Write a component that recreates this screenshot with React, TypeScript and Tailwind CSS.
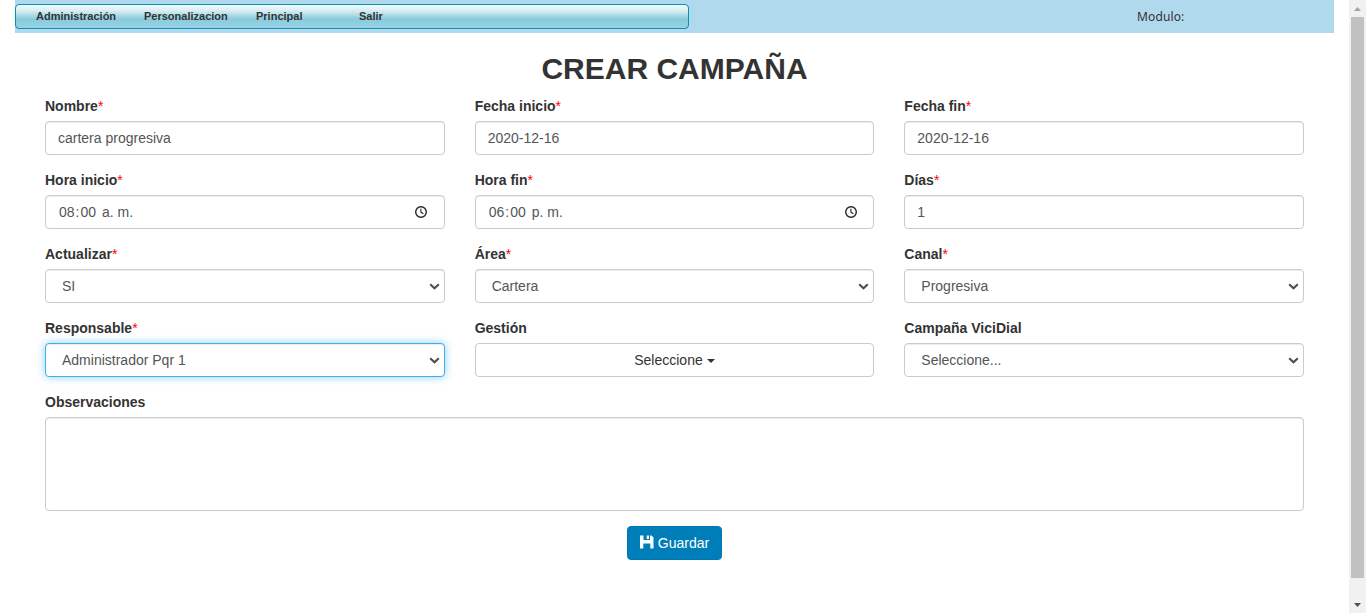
import React from "react";

const control =
  "block h-[34px] w-full rounded border border-[#ccc] bg-white px-3 py-1.5 text-sm leading-5 text-[#555] shadow-[inset_0_1px_1px_rgba(0,0,0,0.075)] outline-none";

function Field({ label, required, children }: { label: string; required?: boolean; children: React.ReactNode }) {
  return (
    <div className="mb-[15px]">
      <label className="mb-[5px] block text-sm leading-5 font-bold">
        {label}
        {required && <span className="font-normal text-[red]">*</span>}
      </label>
      {children}
    </div>
  );
}

function SelectBox({ value, focused }: { value: string; focused?: boolean }) {
  return (
    <div className="relative">
      <select
        className={
          focused
            ? "block h-[34px] w-full appearance-none rounded border border-[#3cb0e8] bg-white px-4 py-1.5 text-sm leading-5 text-[#555] shadow-[inset_0_1px_1px_rgba(0,0,0,0.075),0_0_8px_rgba(60,176,240,0.6)] outline-none"
            : `${control} appearance-none pl-4`
        }
      >
        <option>{value}</option>
      </select>
      <svg className="pointer-events-none absolute top-[14px] right-[5px]" width="11" height="8" viewBox="0 0 11 8" fill="none">
        <path d="M1.2 1.2L5.5 5.2L9.8 1.2" stroke="#4d4d4d" strokeWidth="2.1" />
      </svg>
    </div>
  );
}

function TimeBox({ hour, minute, period }: { hour: string; minute: string; period: string }) {
  return (
    <div className={`${control} flex items-center`}>
      <span className="px-px">{hour}</span>
      <span>:</span>
      <span className="px-px">{minute}</span>
      <span className="ml-[5px]">{period}</span>
      <svg className="mr-[3.6px] ml-auto" width="14" height="14" viewBox="0 0 14 14" fill="none" stroke="#222">
        <circle cx="7" cy="7" r="5.3" strokeWidth="1.4" />
        <path d="M6.9 3.8V7.2L9.4 8.8" strokeWidth="1.1" />
      </svg>
    </div>
  );
}

export default function App() {
  return (
    <div className="flex h-[613px] w-full overflow-hidden bg-white font-['Liberation_Sans',Arial,sans-serif] text-[#333]">
      <main className="flex-1 px-[15px]">
        <header className="flex h-[33px] items-start bg-[#b1d9ed] pt-1">
          <nav className="flex h-[25px] w-[674px] rounded-[4px] border border-[#0b8fb5] bg-[linear-gradient(to_bottom,#f4fbfc_0%,#d6eef3_25%,#88cbdc_62%,#98d2e5_100%)] pl-5 text-[11px] leading-[23px] font-bold">
            <a className="w-[108px]">Administración</a>
            <a className="w-[112px]">Personalizacion</a>
            <a className="w-[103px]">Principal</a>
            <a>Salir</a>
          </nav>
          <span className="ml-[448px] font-['Noto_Sans',sans-serif] text-[12px] leading-[25px] tracking-[0.12px]">Modulo:</span>
        </header>

        <h1 className="mt-[19px] mb-[11px] text-center text-[30px] leading-[33px] font-bold">CREAR CAMPAÑA</h1>

        <form className="px-[30px]">
          <div className="grid grid-cols-3 gap-x-[30px]">
            <Field label="Nombre" required>
              <input className={control} defaultValue="cartera progresiva" />
            </Field>
            <Field label="Fecha inicio" required>
              <input className={control} defaultValue="2020-12-16" />
            </Field>
            <Field label="Fecha fin" required>
              <input className={control} defaultValue="2020-12-16" />
            </Field>
            <Field label="Hora inicio" required>
              <TimeBox hour="08" minute="00" period="a. m." />
            </Field>
            <Field label="Hora fin" required>
              <TimeBox hour="06" minute="00" period="p. m." />
            </Field>
            <Field label="Días" required>
              <input className={control} defaultValue="1" />
            </Field>
            <Field label="Actualizar" required>
              <SelectBox value="SI" />
            </Field>
            <Field label="Área" required>
              <SelectBox value="Cartera" />
            </Field>
            <Field label="Canal" required>
              <SelectBox value="Progresiva" />
            </Field>
            <Field label="Responsable" required>
              <SelectBox value="Administrador Pqr 1" focused />
            </Field>
            <Field label="Gestión">
              <button type="button" className="flex h-[34px] w-full items-center justify-center rounded border border-[#ccc] bg-white text-sm leading-5 text-[#333]">
                Seleccione
                <svg className="mt-px ml-1" width="8" height="4" viewBox="0 0 8 4">
                  <path d="M0 0H8L4 4Z" fill="#333" />
                </svg>
              </button>
            </Field>
            <Field label="Campaña ViciDial">
              <SelectBox value="Seleccione..." />
            </Field>
          </div>
          <Field label="Observaciones">
            <textarea className="block h-[94px] w-full resize-none rounded border border-[#ccc] px-3 py-1.5 text-sm shadow-[inset_0_1px_1px_rgba(0,0,0,0.075)] outline-none" />
          </Field>
          <div className="flex justify-center">
            <button type="button" className="flex h-[34px] items-center rounded border border-[#0077b0] bg-[#007eb9] px-3 text-sm leading-5 text-white">
              <svg className="mr-1 -mt-[3px]" width="14" height="14" viewBox="0 0 14 14">
                <path d="M0 0.5H3.5V5H10V0.5H11.5L13.5 2.5V13.5H10.3V8.5H3.3V13.5H0ZM6.8 0.5H9V4H6.8Z" fill="#fff" />
              </svg>
              Guardar
            </button>
          </div>
        </form>
      </main>

      <aside className="flex w-[17px] flex-col items-center bg-[#f1f1f1]">
        <div className="flex h-[17px] items-center">
          <svg width="7" height="4" viewBox="0 0 7 4">
            <path d="M0 4L3.5 0L7 4Z" fill="#a3a3a3" />
          </svg>
        </div>
        <div className="h-[561px] w-[13px] bg-[#c1c1c1]" />
        <div className="mt-auto flex h-[17px] items-center">
          <svg width="7" height="4" viewBox="0 0 7 4">
            <path d="M0 0H7L3.5 4Z" fill="#505050" />
          </svg>
        </div>
      </aside>
    </div>
  );
}
